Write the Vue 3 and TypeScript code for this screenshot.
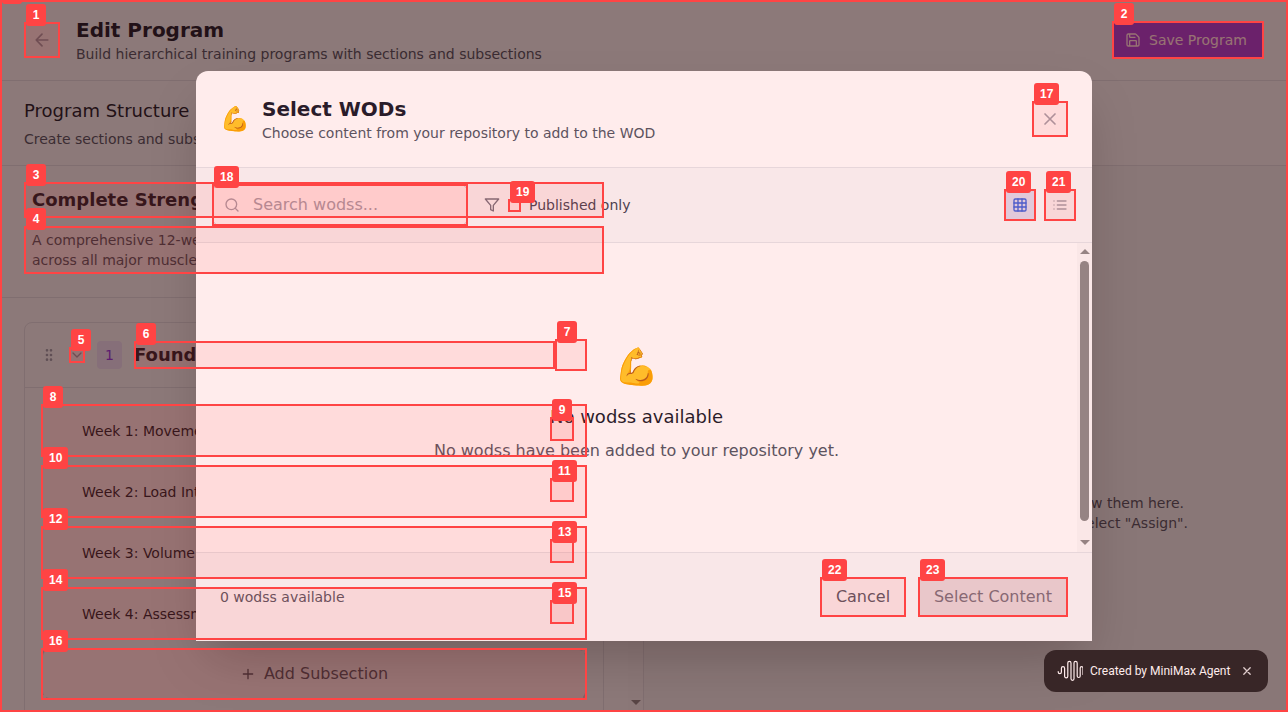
<script setup lang="ts">
interface Mark { id: number; x: number; y: number; w: number; h: number }

const raw: number[][] = [
  [0, 0, 1288, 712], [24, 22, 36, 36], [1112, 21, 152, 38], [24, 182, 580, 36], [24, 226, 580, 48],
  [69, 347, 16, 16], [134, 341, 421, 28], [555, 339, 32, 32], [41, 404, 546, 53], [550, 417, 24, 24],
  [41, 465, 546, 53], [550, 478, 24, 24], [41, 526, 546, 53], [550, 539, 24, 24], [41, 587, 546, 53],
  [550, 600, 24, 24], [41, 648, 546, 52], [1032, 101, 36, 36], [212, 184, 256, 42], [508, 199, 13, 13],
  [1004, 189, 32, 32], [1044, 189, 32, 32], [820, 577, 86, 40], [918, 577, 150, 40],
]
const marks: Mark[] = raw.map(([x, y, w, h], id) => ({ id, x, y, w, h }))
const weeks: string[] = ['Week 1: Movement Quality', 'Week 2: Load Introduction', 'Week 3: Volume Building', 'Week 4: Assessment']
</script>

<template>
  <div class="screen">
    <div class="page">
      <header class="top">
        <button class="back">
          <svg class="ic16" viewBox="0 0 24 24"><path d="m12 19-7-7 7-7M19 12H5" /></svg>
        </button>
        <div class="grow">
          <h1>Edit Program</h1>
          <p class="sub">Build hierarchical training programs with sections and subsections</p>
        </div>
        <button class="save">
          <svg class="ic16" viewBox="0 0 24 24"><path d="M15.2 3a2 2 0 0 1 1.4.6l3.8 3.8a2 2 0 0 1 .6 1.4V19a2 2 0 0 1-2 2H5a2 2 0 0 1-2-2V5a2 2 0 0 1 2-2zM17 21v-7a1 1 0 0 0-1-1H8a1 1 0 0 0-1 1v7M7 3v4a1 1 0 0 0 1 1h7" /></svg>
          <span>Save Program</span>
        </button>
      </header>
      <section class="structure">
        <h2>Program Structure</h2>
        <p class="sub">Create sections and subsections</p>
      </section>
      <main class="cols">
        <div class="left">
          <div class="leftmain">
            <div class="info">
              <div class="ptitle">Complete Strength</div>
              <div class="pdesc">A comprehensive 12-week program<br>across all major muscle groups</div>
            </div>
            <div class="card">
              <div class="cardhead">
                <svg class="ic16 grip" viewBox="0 0 24 24"><circle v-for="n in 6" :key="n" :cx="n % 2 ? 9 : 15" :cy="n < 3 ? 5 : n < 5 ? 12 : 19" r="1" /></svg>
                <svg class="ic16 grip" viewBox="0 0 24 24"><path d="m6 9 6 6 6-6" /></svg>
                <span class="num">1</span>
                <span class="stitle">Foundation</span>
              </div>
              <div class="rows">
                <div v-for="w in weeks" :key="w" class="week">{{ w }}</div>
                <div class="add">
                  <svg class="ic16" viewBox="0 0 24 24"><path d="M5 12h14M12 5v14" /></svg>
                  <span>Add Subsection</span>
                </div>
              </div>
            </div>
          </div>
          <div class="track"><i class="arrow down"></i></div>
        </div>
        <div class="right">
          <p class="first">and view them here.</p>
          <p>or select "Assign".</p>
        </div>
      </main>
    </div>

    <div class="backdrop">
      <div class="modal">
        <div class="mhead">
          <span class="emoji">💪</span>
          <div class="grow">
            <h1 class="mtitle">Select WODs</h1>
            <p class="sub">Choose content from your repository to add to the WOD</p>
          </div>
          <button class="close"><svg class="ic20" viewBox="0 0 24 24"><path d="M18 6 6 18M6 6l12 12" /></svg></button>
        </div>
        <div class="tools">
          <div class="search">
            <svg class="ic16" viewBox="0 0 24 24"><circle cx="11" cy="11" r="8" /><path d="m21 21-4.3-4.3" /></svg>
            <span>Search wodss...</span>
          </div>
          <div class="filter">
            <svg class="ic16" viewBox="0 0 24 24"><path d="M22 3H2l8 9.46V19l4 2v-8.54z" /></svg>
            <i class="check"></i>
            <span>Published only</span>
          </div>
          <div class="views">
            <button class="view on"><svg class="ic16" viewBox="0 0 24 24"><rect x="3" y="3" width="18" height="18" rx="2" /><path d="M3 9h18M3 15h18M9 3v18M15 3v18" /></svg></button>
            <button class="view"><svg class="ic16" viewBox="0 0 24 24"><path d="M8 6h13M8 12h13M8 18h13M3 6h.01M3 12h.01M3 18h.01" /></svg></button>
          </div>
        </div>
        <div class="body">
          <div class="empty">
            <div class="big">💪</div>
            <h3>No wodss available</h3>
            <p>No wodss have been added to your repository yet.</p>
          </div>
          <div class="bar"><i class="arrow up"></i><i class="thumb"></i><i class="arrow down"></i></div>
        </div>
        <div class="foot">
          <span class="count">0 wodss available</span>
          <button class="cancel">Cancel</button>
          <button class="choose">Select Content</button>
        </div>
      </div>
    </div>

    <div class="maker">
      <svg class="wave" viewBox="0 0 26 22"><path d="M1.2 11.5v.6a1.6 1.6 0 0 0 3.2 0V8.2a1.6 1.6 0 0 1 3.2 0v8a1.6 1.6 0 0 0 3.2 0V3a1.6 1.6 0 0 1 3.2 0v15.8a1.5 1.5 0 0 0 3 0V3a1.6 1.6 0 0 1 3.2 0v13a1.5 1.5 0 0 0 3 0V8a1.4 1.4 0 0 1 2.8 0v6.5" /></svg>
      <span>Created by MiniMax Agent</span>
      <svg class="x" viewBox="0 0 10 10"><path d="m1.8 1.8 6.4 6.4M8.2 1.8 1.8 8.2" /></svg>
    </div>

    <div v-for="m in marks" :key="m.id" class="mark" :style="{ left: m.x + 'px', top: m.y + 'px', width: m.w + 'px', height: m.h + 'px' }">
      <b class="tag">{{ m.id }}</b>
    </div>
  </div>
</template>

<style>
body { margin: 0; overflow: hidden; }
</style>

<style scoped>
* { box-sizing: border-box; margin: 0; padding: 0; }
.screen { position: relative; width: 1288px; height: 712px; overflow: hidden; font: 14px/20px "DejaVu Sans", sans-serif; color: #111827; background: #fff; }
button { border: 0; background: none; font: inherit; display: flex; align-items: center; justify-content: center; }
svg { fill: none; stroke: currentColor; stroke-width: 2; stroke-linecap: round; stroke-linejoin: round; flex: none; }
.ic16 { width: 16px; height: 16px; }
.ic20 { width: 20px; height: 20px; }
.grow { flex: 1; }
.page { height: 712px; display: flex; flex-direction: column; }
.top { height: 81px; flex: none; border-bottom: 1px solid #e5e7eb; display: flex; align-items: center; padding: 0 24px; gap: 16px; }
.back { width: 36px; height: 36px; color: #9ca3af; }
.back svg { width: 20px; height: 20px; }
h1 { font-size: 20px; line-height: 28px; font-weight: 700; }
.sub { color: #4b5563; white-space: nowrap; }
.save { width: 152px; height: 38px; padding: 0 16px 0 13px; gap: 8px; justify-content: flex-start; background: #9333ea; color: #fff; white-space: nowrap; }
.structure { height: 85px; flex: none; padding: 16px 24px; border-bottom: 1px solid #e5e7eb; }
h2 { font-size: 18px; line-height: 28px; font-weight: 400; margin-bottom: 4px; }
.cols { flex: 1; display: flex; min-height: 0; }
.left { width: 644px; border-right: 1px solid #e5e7eb; display: flex; overflow: hidden; }
.leftmain { flex: 1; }
.info { height: 132px; padding: 16px 24px 0; border-bottom: 1px solid #e5e7eb; }
.ptitle { height: 36px; padding: 0 8px; font-size: 18px; line-height: 36px; font-weight: 700; }
.pdesc { margin-top: 8px; padding: 4px 8px; color: #4b5563; }
.card { margin: 24px 24px 0; border: 1px solid #e5e7eb; border-radius: 8px; height: 420px; }
.cardhead { height: 65px; border-bottom: 1px solid #e5e7eb; padding: 0 16px; display: flex; align-items: center; gap: 12px; }
.grip { color: #9ca3af; }
.num { width: 25px; height: 28px; line-height: 28px; text-align: center; border-radius: 4px; background: #f3e8ff; color: #9333ea; }
.stitle { font-size: 18px; line-height: 28px; font-weight: 700; }
.rows { padding: 16px; display: flex; flex-direction: column; gap: 8px; }
.week { height: 53px; line-height: 55px; padding-left: 41px; }
.add { height: 52px; border: 2px dashed #d1d5db; border-radius: 8px; color: #4b5563; font-size: 16px; display: flex; align-items: center; justify-content: center; gap: 8px; }
.track { width: 15px; background: #fcfcfc; display: flex; flex-direction: column; justify-content: flex-end; align-items: center; padding-bottom: 7px; }
.arrow { width: 0; height: 0; border: 5px solid transparent; }
.arrow.down { border-top-color: #8b8b8b; border-bottom: 0; }
.arrow.up { border-bottom-color: #8b8b8b; border-top: 0; }
.right { flex: 1; background: #f9fafb; padding-top: 327px; text-align: right; color: #4b5563; }
.right p { margin-right: 100px; }
.right .first { margin-right: 104px; }
.backdrop { position: absolute; inset: 0; background: rgba(0, 0, 0, .5); display: flex; align-items: center; justify-content: center; }
.modal { width: 896px; height: 570px; background: #fff; border-radius: 12px 12px 0 0; box-shadow: 0 25px 50px -12px rgba(0, 0, 0, .25); display: flex; flex-direction: column; }
.mhead { height: 97px; flex: none; border-bottom: 1px solid #e5e7eb; padding: 0 24px; display: flex; align-items: center; gap: 12px; }
.emoji { font-size: 24px; line-height: 32px; }
.mtitle { color: #111827; }
.close { width: 36px; height: 36px; color: #9ca3af; }
.tools { height: 75px; flex: none; border-bottom: 1px solid #e5e7eb; background: #f9fafb; padding: 0 16px; display: flex; align-items: center; gap: 16px; }
.search { width: 256px; height: 42px; border: 1px solid #d1d5db; border-radius: 8px; background: #fff; padding: 0 11px; display: flex; align-items: center; gap: 13px; font-size: 16px; color: #9ca3af; }
.filter { display: flex; align-items: center; gap: 8px; color: #374151; flex: 1; }
.filter svg { color: #6b7280; }
.check { width: 13px; height: 13px; background: #fff; border: 1px solid #767676; border-radius: 2px; }
.views { display: flex; gap: 8px; }
.view { width: 32px; height: 32px; border-radius: 4px; color: #9ca3af; }
.on { background: #dbeafe; color: #2563eb; }
.body { flex: 1; display: flex; min-height: 0; }
.empty { flex: 1; text-align: center; padding-top: 104px; font-size: 16px; line-height: 24px; color: #4b5563; }
.big { font-size: 36px; line-height: 40px; margin-bottom: 16px; }
h3 { font-size: 18px; line-height: 28px; font-weight: 400; color: #111827; margin-bottom: 8px; }
.bar { width: 15px; background: #fafafa; display: flex; flex-direction: column; align-items: center; padding: 6px 0 7px; }
.thumb { width: 9px; height: 260px; margin: 7px 0 auto; border-radius: 5px; background: #8b8b8b; }
.foot { height: 89px; flex: none; border-top: 1px solid #e5e7eb; background: #f9fafb; padding: 0 24px; display: flex; align-items: center; gap: 12px; font-size: 16px; }
.count { flex: 1; font-size: 14px; color: #4b5563; }
.cancel { width: 86px; height: 40px; color: #4b5563; }
.choose { width: 150px; height: 40px; background: #e5e7eb; color: #6b7280; border-radius: 4px; white-space: nowrap; }
.maker { position: absolute; left: 1044px; top: 650px; width: 224px; height: 42px; border-radius: 12px; background: #222324; color: #fff; display: flex; align-items: center; padding: 0 16px 0 13px; font: 400 12px/16px Roboto, sans-serif; white-space: nowrap; }
.wave { width: 26px; height: 22px; stroke-width: 1.2; margin-right: 7px; }
.maker span { flex: 1; }
.x { width: 10px; height: 10px; stroke-width: 1.3; color: #ddd; }
.mark { position: absolute; border: 2px solid #f44; background: rgba(255, 68, 68, .1); }
.tag { position: absolute; left: 0; top: -20px; min-width: 20px; height: 22px; padding: 0 6px; border-radius: 3px; background: #f44; color: #fff; font: 700 12px/22px "Liberation Sans", Arial, sans-serif; text-align: center; }
</style>
